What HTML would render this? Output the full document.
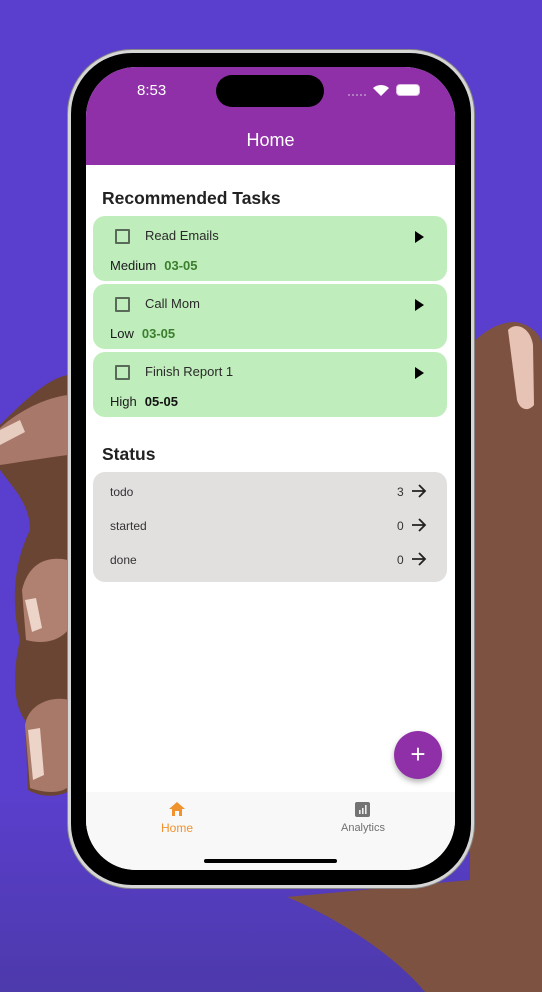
<!DOCTYPE html>
<html><head><meta charset="utf-8"><style>
*{margin:0;padding:0;box-sizing:border-box}
body{width:542px;height:992px;overflow:hidden;background:linear-gradient(#5a3ecd 0%,#5a3ecd 80%,#4d3aab 100%);position:relative;font-family:"Liberation Sans",sans-serif}
.abs{position:absolute}
.frame{left:68px;top:50px;width:406px;height:838px;border-radius:64px;background:#000;border:3px solid #d6d6d6;box-shadow:0 0 0 1px #888}
.screen{left:86px;top:67px;width:369px;height:803px;border-radius:50px;background:#fff;overflow:hidden}
.card{left:7px;width:354px;height:65px;background:#c0edbc;border-radius:12px}
.cb{left:22px;top:13px;width:15px;height:15px;border:2px solid #5a6a58;border-radius:1px}
.tt{left:52px;top:12px;font-size:13px;color:#2a2a2a}
.play{left:322px;top:15px;width:0;height:0;border-left:9px solid #000;border-top:6px solid transparent;border-bottom:6px solid transparent}
.pr{left:17px;top:42px;font-size:13px;color:#1a1a1a}
.dt{font-weight:bold;color:#3b7f2e;margin-left:8px}
.row{left:17px;font-size:12px;color:#333}
.num{left:304px;font-size:12px;color:#333}
.h{font-weight:bold;font-size:17.5px;color:#222}
</style></head><body>
<svg class="abs" style="left:0;top:0" width="542" height="992">
<path d="M470 345 C485 330 500 322 515 322 C530 324 542 335 542 345 L542 992 L425 992 C390 950 330 915 287 897 L470 880 Z" fill="#7e5240"/>
<path d="M508 330 C515 322 530 326 533 345 L534 405 C528 412 520 410 517 400 Z" fill="#e6c3b5"/>
<path d="M68 375 C50 378 30 395 0 425 L0 470 C15 490 30 505 30 530 C15 560 10 600 20 640 C15 660 10 700 25 720 L28 790 C45 800 65 795 70 790 Z" fill="#6b4533"/>
<path d="M68 395 C45 398 20 410 0 428 L0 465 C20 462 45 458 68 455 Z" fill="#a8786a"/>
<path d="M0 430 L20 420 L25 432 L0 445 Z" fill="#e7ccc0"/>
<path d="M68 560 C45 555 28 565 22 590 L26 640 C45 645 60 640 68 630 Z" fill="#b08070"/>
<path d="M25 600 L32 632 L42 628 L36 598 Z" fill="#ecd4c8"/>
<path d="M70 700 C50 695 28 705 25 725 L30 788 C50 795 65 792 70 785 Z" fill="#a87868"/>
<path d="M28 730 L33 780 L44 775 L40 728 Z" fill="#ecd4c8"/>
</svg>
<div class="abs frame"></div>
<div class="abs screen">
 <div class="abs" style="left:0;top:0;width:369px;height:98px;background:#9030a8"></div>
 <div class="abs" style="left:51px;top:15px;font-size:15px;color:#fff">8:53</div>
 <div class="abs" style="left:130px;top:8px;width:108px;height:32px;border-radius:16px;background:#000"></div>
 <div class="abs" style="left:262px;top:27px;width:18px;height:2px;border-top:2px dotted #b07cc0"></div>
 <svg class="abs" style="left:286px;top:16px" width="18" height="14"><path d="M1 5 A12 12 0 0 1 17 5 L9 13 Z" fill="#fff"/></svg>
 <div class="abs" style="left:310px;top:17px;width:24px;height:12px;border-radius:4px;background:#fff;border:1px solid #d8b8e0"></div>
 <div class="abs" style="left:0;top:63px;width:369px;text-align:center;font-size:18px;color:#fff">Home</div>
 <div class="abs h" style="left:16px;top:121px">Recommended Tasks</div>
 <div class="abs card" style="top:149px"><div class="abs cb"></div><div class="abs tt">Read Emails</div><div class="abs play"></div><div class="abs pr">Medium<span class="dt">03-05</span></div></div>
 <div class="abs card" style="top:217px"><div class="abs cb"></div><div class="abs tt">Call Mom</div><div class="abs play"></div><div class="abs pr">Low<span class="dt">03-05</span></div></div>
 <div class="abs card" style="top:285px"><div class="abs cb"></div><div class="abs tt">Finish Report 1</div><div class="abs play"></div><div class="abs pr">High<span class="dt" style="color:#111">05-05</span></div></div>
 <div class="abs h" style="left:16px;top:377px">Status</div>
 <div class="abs" style="left:7px;top:405px;width:354px;height:110px;background:#e2dfdf;border-radius:12px">
  <div class="abs row" style="top:13px">todo</div><div class="abs num" style="top:13px">3</div>
  <div class="abs row" style="top:47px">started</div><div class="abs num" style="top:47px">0</div>
  <div class="abs row" style="top:81px">done</div><div class="abs num" style="top:81px">0</div>
  <svg class="abs" style="left:318px;top:11px" width="16" height="86" fill="none" stroke="#222" stroke-width="1.8"><path d="M1 8 H14 M8 2 L14 8 L8 14"/><path d="M1 42 H14 M8 36 L14 42 L8 48"/><path d="M1 76 H14 M8 70 L14 76 L8 82"/></svg>
 </div>
 <div class="abs" style="left:308px;top:664px;width:48px;height:48px;border-radius:50%;background:#9030a8;box-shadow:0 3px 6px rgba(0,0,0,.3)"></div>
 <div class="abs" style="left:308px;top:664px;width:48px;height:48px;color:#fff;font-size:26px;text-align:center;line-height:46px">+</div>
 <div class="abs" style="left:0;top:725px;width:369px;height:78px;background:#f8f8f8"></div>
 <svg class="abs" style="left:82px;top:734px" width="18" height="16"><path d="M9 1 L17 8 H14 V15 H11 V10 H7 V15 H4 V8 H1 Z" fill="#f0922e"/></svg>
 <div class="abs" style="left:60px;top:754px;width:62px;text-align:center;font-size:12px;color:#f0922e">Home</div>
 <svg class="abs" style="left:269px;top:735px" width="15" height="15"><rect width="15" height="15" rx="2" fill="#737373"/><rect x="4" y="8" width="1.6" height="4" fill="#eee"/><rect x="7" y="6" width="1.6" height="6" fill="#eee"/><rect x="10" y="3" width="1.6" height="9" fill="#eee"/></svg>
 <div class="abs" style="left:246px;top:755px;width:62px;text-align:center;font-size:11px;color:#707070">Analytics</div>
 <div class="abs" style="left:118px;top:792px;width:133px;height:4px;border-radius:2px;background:#000"></div>
</div>
</body></html>
